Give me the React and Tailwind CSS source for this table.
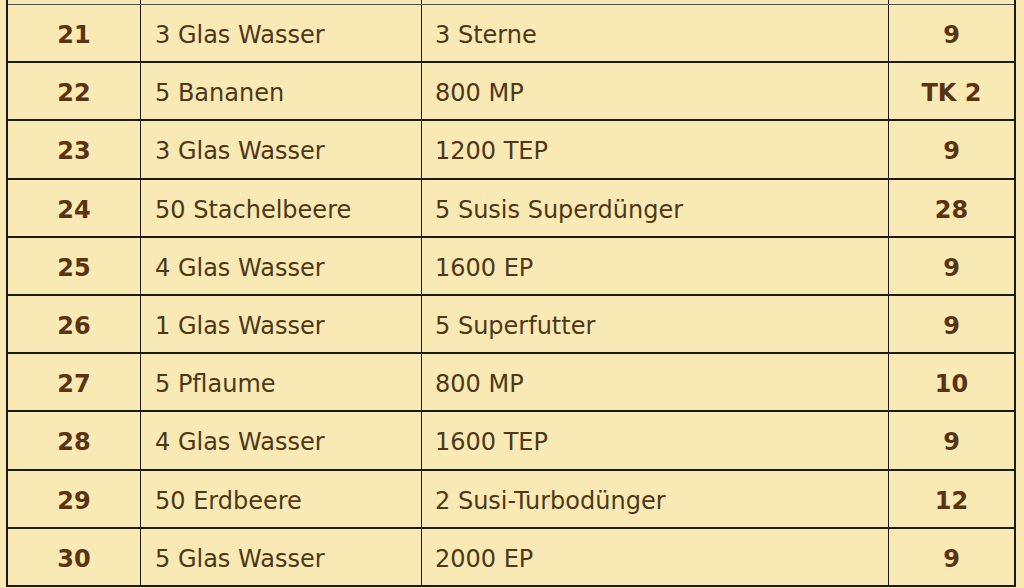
import React from "react";

const rows = [
  { level: "21", cost: "3 Glas Wasser", reward: "3 Sterne", num: "9" },
  { level: "22", cost: "5 Bananen", reward: "800 MP", num: "TK 2" },
  { level: "23", cost: "3 Glas Wasser", reward: "1200 TEP", num: "9" },
  { level: "24", cost: "50 Stachelbeere", reward: "5 Susis Superdünger", num: "28" },
  { level: "25", cost: "4 Glas Wasser", reward: "1600 EP", num: "9" },
  { level: "26", cost: "1 Glas Wasser", reward: "5 Superfutter", num: "9" },
  { level: "27", cost: "5 Pflaume", reward: "800 MP", num: "10" },
  { level: "28", cost: "4 Glas Wasser", reward: "1600 TEP", num: "9" },
  { level: "29", cost: "50 Erdbeere", reward: "2 Susi-Turbodünger", num: "12" },
  { level: "30", cost: "5 Glas Wasser", reward: "2000 EP", num: "9" },
];

const App = () => {
  return (
    <div
      className="w-[1024px] h-[588px] overflow-hidden bg-[#f9e9b4] text-[24px]"
      style={{ fontFamily: '"DejaVu Sans", Verdana, sans-serif' }}
    >
      <div className="ml-[6px] w-[1010px] border-x-2 border-[#1c1a14]">
        <div className="h-[5px] grid grid-cols-[133px_281px_467px_125px] border-b border-[#55524a]">
          <div className="border-r border-[#1c1a14]" />
          <div className="border-r border-[#1c1a14]" />
          <div className="border-r border-[#1c1a14]" />
          <div />
        </div>
        {rows.map((row) => (
          <div
            key={row.level}
            className="h-[58.2px] grid grid-cols-[133px_281px_467px_125px] border-b-2 border-[#1c1a14]"
          >
            <div className="flex items-center justify-center pt-[4px] font-bold text-[#5a3410] border-r border-[#1c1a14]">
              {row.level}
            </div>
            <div className="flex items-center pl-[14px] pt-[4px] text-[#4e3816] border-r border-[#1c1a14]">
              {row.cost}
            </div>
            <div className="flex items-center pl-[13px] pt-[4px] text-[#4e3816] border-r border-[#1c1a14]">
              {row.reward}
            </div>
            <div className="flex items-center justify-center pt-[4px] font-bold text-[#5a3410]">
              {row.num}
            </div>
          </div>
        ))}
      </div>
    </div>
  );
};

export default App;
